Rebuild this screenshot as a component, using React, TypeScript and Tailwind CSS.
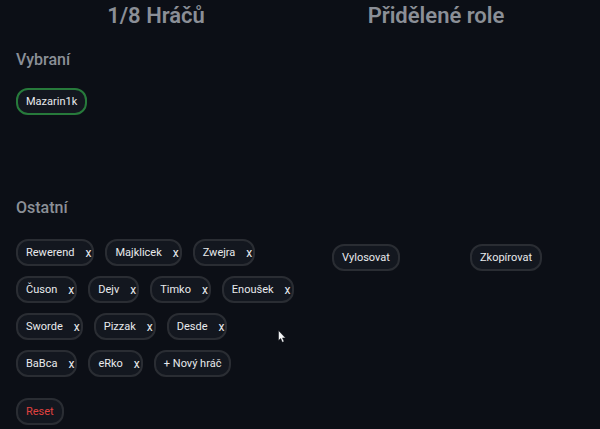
import { useState } from "react";

const players = [
  "Rewerend",
  "Majklicek",
  "Zwejra",
  "Čuson",
  "Dejv",
  "Timko",
  "Enoušek",
  "Sworde",
  "Pizzak",
  "Desde",
  "BaBca",
  "eRko",
];

const pill =
  "flex h-[27px] items-center rounded-xl border-2 bg-[#13171f] text-[11px] leading-4 whitespace-nowrap";

function Action({ label, tone = "text-[#e8eaed]" }: { label: string; tone?: string }) {
  return (
    <button type="button" className={`${pill} border-[#2a2d33] px-2 ${tone}`}>
      {label}
    </button>
  );
}

function Player({ name, onRemove }: { name: string; onRemove: () => void }) {
  return (
    <li className={`${pill} border-[#2a2d33] text-[#e8eaed]`}>
      <button type="button" className="pl-2">
        {name}
      </button>
      <button
        type="button"
        aria-label={`x ${name}`}
        className="pr-px pl-[11px] text-[12px]"
        onClick={onRemove}
      >
        x
      </button>
    </li>
  );
}

export default function App() {
  const [others, setOthers] = useState(players);

  return (
    <div className="min-h-screen bg-[#0c0f16] pr-6 pl-4 font-['Roboto',sans-serif]">
      <main className="grid grid-cols-2 text-[#8b8f97]">
        <section className="pb-1">
          <h1 className="pt-1 text-center text-[22px] leading-6 font-semibold">1/8 Hráčů</h1>
          <h2 className="mt-5 text-[16px] leading-6 font-medium">Vybraní</h2>
          <div className="mt-4 flex h-24 items-start">
            <button type="button" className={`${pill} border-[#277a3b] px-2 text-[#e8eaed]`}>
              Mazarin1k
            </button>
          </div>
          <h2 className="mt-3 text-[16px] leading-6 font-medium">Ostatní</h2>
          <ul className="mt-[19px] flex flex-wrap gap-x-[11px] gap-y-[10px]">
            {others.map((name) => (
              <Player
                key={name}
                name={name}
                onRemove={() => setOthers(others.filter((n) => n !== name))}
              />
            ))}
            <li>
              <Action label="+ Nový hráč" />
            </li>
          </ul>
          <div className="mt-[21px] flex">
            <Action label="Reset" tone="text-[#e0423f]" />
          </div>
        </section>
        <section>
          <h1 className="pt-1 text-center text-[22px] leading-6 font-semibold">Přidělené role</h1>
          <div className="mt-[216px] grid grid-cols-2 justify-items-center">
            <Action label="Vylosovat" />
            <Action label="Zkopírovat" />
          </div>
        </section>
      </main>
      <svg
        aria-hidden="true"
        viewBox="0 0 8 13"
        className="pointer-events-none absolute top-[330px] left-[278px] h-[13px] w-2"
      >
        <path
          d="M.5.5v10l2.2-2 1.6 3.8 1.8-.8-1.6-3.6h3z"
          fill="#f4f5f6"
          stroke="#0c0f16"
          strokeWidth=".5"
        />
      </svg>
    </div>
  );
}
